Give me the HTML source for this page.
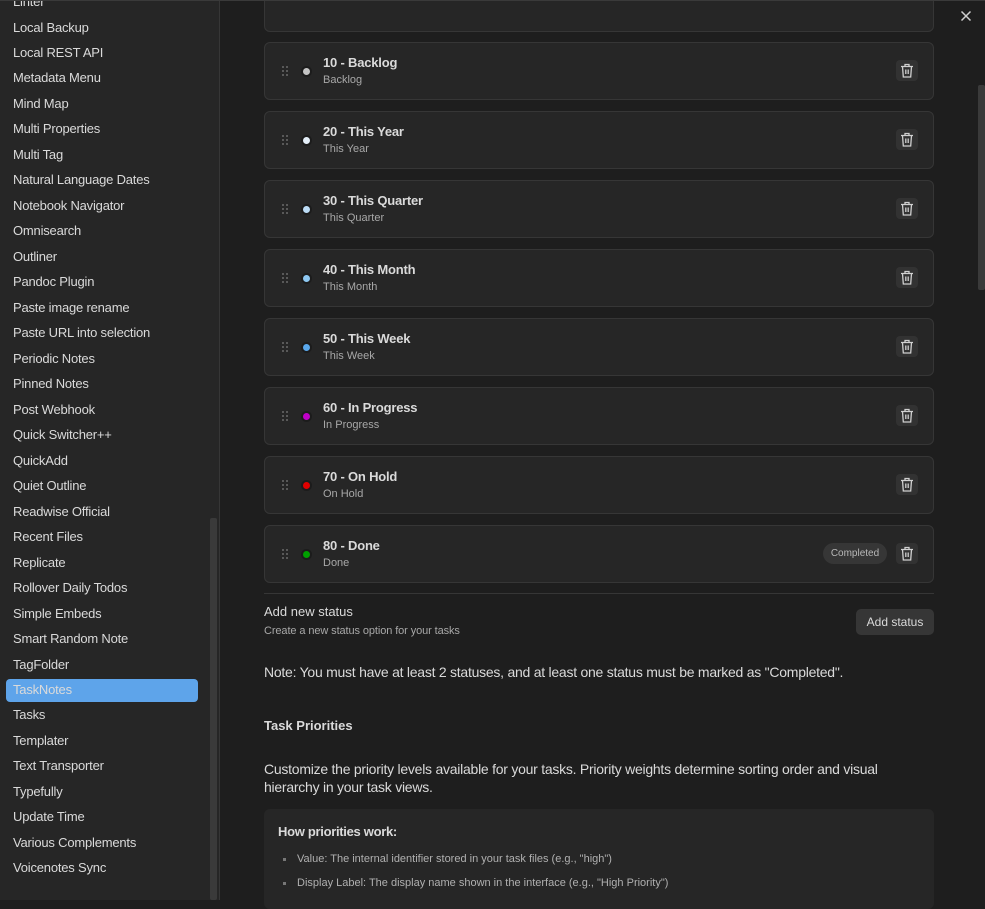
<!DOCTYPE html>
<html><head><meta charset="utf-8"><style>
*{box-sizing:border-box;margin:0;padding:0}
body{width:985px;height:900px;overflow:hidden;background:#1e1e1e;font-family:"Liberation Sans",sans-serif;position:relative;color:#dadada}
#side{position:absolute;left:0;top:0;width:220px;height:900px;background:#262626;border-right:1px solid #363636}
.si{position:absolute;left:13px;font-size:13px;color:#dadada;letter-spacing:-0.2px;line-height:16px}
.sel{position:absolute;left:6px;top:679px;width:192px;height:23px;background:#5ea4ea;border-radius:4px}
.sb{position:absolute;left:210px;top:518px;width:7px;height:382px;background:#3a3a3a;border-radius:2px}
.card{position:absolute;left:264px;width:670px;height:58px;background:#262626;border:1px solid #363636;border-radius:6px}
.grip{position:absolute;left:16px;top:22px;width:8px;height:12px;background-image:radial-gradient(circle,#666 0.9px,transparent 1.1px);background-size:4px 4px}
.dot{position:absolute;left:36px;top:23px;width:11px;height:11px;border-radius:50%;border:2px solid #1c1c1c}
.t{position:absolute;left:58px;top:12px;font-size:13px;font-weight:bold;color:#dadada;letter-spacing:-0.2px}
.s{position:absolute;left:58px;top:31px;font-size:11px;color:#a8a8a8}
.tr{position:absolute;left:631px;top:17px;width:22px;height:21px;background:#323232;border-radius:4px}
.tr svg{position:absolute;left:4px;top:3px}
.badge{position:absolute;left:558px;top:17px;width:64px;height:21px;background:#363636;border-radius:11px;font-size:10px;color:#b8b8b8;text-align:center;line-height:21px}
</style></head><body>
<div id="side">
<div class="sel"></div>
<div class="sb"></div>
</div>
<div id="items"></div>
<div style="position:absolute;left:264px;top:-20px;width:670px;height:52px;background:#262626;border:1px solid #363636;border-radius:6px"></div>
<div style="position:absolute;left:0;top:0;width:985px;height:1px;background:#3a3a3a"></div>
<svg style="position:absolute;left:960px;top:10px" width="12" height="12" viewBox="0 0 12 12"><path d="M1.5 1.5L10.5 10.5M10.5 1.5L1.5 10.5" stroke="#cfcfcf" stroke-width="1.5"/></svg>
<div style="position:absolute;left:978px;top:85px;width:7px;height:205px;background:#3a3a3a;border-radius:2px"></div>
<div id="cards"></div>
<div style="position:absolute;left:264px;top:593px;width:670px;height:1px;background:#363636"></div>
<div style="position:absolute;left:264px;top:604px;font-size:13px;color:#dadada">Add new status</div>
<div style="position:absolute;left:264px;top:625px;font-size:11px;color:#a8a8a8;letter-spacing:-0.1px">Create a new status option for your tasks</div>
<div style="position:absolute;left:856px;top:609px;width:78px;height:26px;background:#363636;border-radius:5px;font-size:12px;color:#dadada;text-align:center;line-height:26px">Add status</div>
<div style="position:absolute;left:264px;top:664px;font-size:14px;color:#dadada;letter-spacing:-0.25px">Note: You must have at least 2 statuses, and at least one status must be marked as "Completed".</div>
<div style="position:absolute;left:264px;top:718px;font-size:13px;font-weight:bold;color:#dadada">Task Priorities</div>
<div style="position:absolute;left:264px;top:760px;width:660px;font-size:14px;color:#dadada;line-height:18px;letter-spacing:-0.25px">Customize the priority levels available for your tasks. Priority weights determine sorting order and visual hierarchy in your task views.</div>
<div style="position:absolute;left:264px;top:809px;width:670px;height:100px;background:#262626;border-radius:6px">
<div style="position:absolute;left:14px;top:15px;font-size:13px;font-weight:bold;color:#dadada;letter-spacing:-0.3px">How priorities work:</div>
<div style="position:absolute;left:19px;top:49px;width:3px;height:3px;background:#777"></div>
<div style="position:absolute;left:33px;top:44px;font-size:11px;color:#b0b0b0">Value: The internal identifier stored in your task files (e.g., "high")</div>
<div style="position:absolute;left:19px;top:73px;width:3px;height:3px;background:#777"></div>
<div style="position:absolute;left:33px;top:68px;font-size:11px;color:#b0b0b0">Display Label: The display name shown in the interface (e.g., "High Priority")</div>
</div>
<script>
var names=["Linter","Local Backup","Local REST API","Metadata Menu","Mind Map","Multi Properties","Multi Tag","Natural Language Dates","Notebook Navigator","Omnisearch","Outliner","Pandoc Plugin","Paste image rename","Paste URL into selection","Periodic Notes","Pinned Notes","Post Webhook","Quick Switcher++","QuickAdd","Quiet Outline","Readwise Official","Recent Files","Replicate","Rollover Daily Todos","Simple Embeds","Smart Random Note","TagFolder","TaskNotes","Tasks","Templater","Text Transporter","Typefully","Update Time","Various Complements","Voicenotes Sync"];
var h="";names.forEach(function(n,i){h+='<div class="si" style="top:'+(-6+i*25.48).toFixed(1)+'px">'+n+'</div>'});
document.getElementById("items").innerHTML=h;
var c=[["10 - Backlog","Backlog","#c4c4c4"],["20 - This Year","This Year","#e4eef8"],["30 - This Quarter","This Quarter","#bcdcf6"],["40 - This Month","This Month","#8ec8f2"],["50 - This Week","This Week","#5aa8ec"],["60 - In Progress","In Progress","#c000c8"],["70 - On Hold","On Hold","#e00000"],["80 - Done","Done","#00a000"]];
var tr='<svg width="14" height="15" viewBox="0 0 14 15"><path d="M1 3.5H13M5 3.5V1.5H9V3.5M2.5 3.5L3.3 14H10.7L11.5 3.5M5.8 6.5V11M8.2 6.5V11" fill="none" stroke="#d0d0d0" stroke-width="1.3"/></svg>';
h="";c.forEach(function(x,i){h+='<div class="card" style="top:'+(42+i*69)+'px"><div class="grip"></div><div class="dot" style="background:'+x[2]+'"></div><div class="t">'+x[0]+'</div><div class="s">'+x[1]+'</div>'+(i==7?'<div class="badge">Completed</div>':'')+'<div class="tr">'+tr+'</div></div>'});
document.getElementById("cards").innerHTML=h;
</script>
</body></html>
